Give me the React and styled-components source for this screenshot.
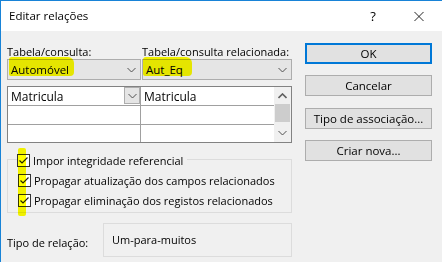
import styled, { createGlobalStyle } from "styled-components";

const GlobalStyle = createGlobalStyle`
  html, body { margin: 0; padding: 0; background: #fff; }
  body { font-family: "Open Sans", "Noto Sans", sans-serif; font-size: 11px; color: #000; }
`;

const Window = styled.div`
  width: 442px;
  height: 262px;
  box-sizing: border-box;
  border-top: 1px solid #1883d7;
  border-left: 1px solid #1883d7;
  background: #f0f0f0;
  display: flex;
  flex-direction: column;
  overflow: hidden;
`;

const TitleBar = styled.div`
  height: 30px;
  background: #fff;
  display: flex;
  align-items: center;
  padding-left: 8px;
  flex-shrink: 0;
`;

const Title = styled.div`
  flex: 1;
  font-size: 11.5px;
  padding-bottom: 1px;
`;

const TitleIcon = styled.div`
  width: ${(p) => p.$w}px;
  display: flex;
  justify-content: center;
  align-items: center;
  font-size: 13px;
`;

const Body = styled.div`
  display: flex;
  padding: 12px 0 0 6px;
  gap: 13px;
`;

const LeftCol = styled.div`
  width: 285px;
  display: flex;
  flex-direction: column;
`;

const LabelRow = styled.div`
  display: flex;
  height: 16px;
  align-items: center;
`;

const Label = styled.div`
  width: ${(p) => p.$w}px;
  white-space: nowrap;
`;

const ComboRow = styled.div`
  display: flex;
  gap: 1px;
`;

const Combo = styled.div`
  position: relative;
  width: ${(p) => p.$w}px;
  height: 21px;
  box-sizing: border-box;
  border: 1px solid #adadad;
  background: #e5e5e5;
  display: flex;
  align-items: center;
  justify-content: space-between;
  padding: 0 4px 0 3px;
  font-size: 11.5px;
`;

const Marker = styled.div`
  position: absolute;
  left: ${(p) => p.$l}px;
  top: ${(p) => p.$t}px;
  width: ${(p) => p.$w}px;
  height: ${(p) => p.$h}px;
  background: #ffff00;
  mix-blend-mode: multiply;
  border-radius: ${(p) => p.$r || "3px 6px 4px 2px"};
  pointer-events: none;
`;

const Grid = styled.div`
  margin-top: 6px;
  height: 57px;
  box-sizing: border-box;
  border: 1px solid #828282;
  background: #fff;
  display: flex;
`;

const Cells = styled.div`
  flex: 1;
  display: grid;
  grid-template-columns: 133px 1fr;
  grid-template-rows: 19px 19px 17px;
`;

const Cell = styled.div`
  border-right: ${(p) => (p.$last ? "none" : "1px solid #a0a0a0")};
  border-bottom: ${(p) => (p.$bottom ? "none" : "1px solid #a0a0a0")};
  display: flex;
  align-items: center;
  justify-content: space-between;
  padding-left: 3px;
  font-size: 12px;
`;

const CellDrop = styled.div`
  width: 16px;
  height: 17px;
  box-sizing: border-box;
  border: 1px solid #adadad;
  background: #e5e5e5;
  display: flex;
  align-items: center;
  justify-content: center;
  align-self: flex-start;
`;

const ScrollBar = styled.div`
  width: 17px;
  background: #f0f0f0;
  display: flex;
  flex-direction: column;
  align-items: center;
  padding: 0 0 1px;
`;

const ScrollArrow = styled.div`
  height: 17px;
  display: flex;
  align-items: center;
  justify-content: center;
`;

const Thumb = styled.div`
  width: 15px;
  height: 18px;
  background: #cdcdcd;
`;

const Spacer = styled.div`
  flex: 1;
`;

const Group = styled.div`
  margin-top: 16px;
  padding: 0 0 0 9px;
  border: 1px solid #dcdcdc;
  height: 54px;
  box-sizing: border-box;
  position: relative;
  display: flex;
  flex-direction: column;
  align-items: flex-start;
`;

const CheckRow = styled.div`
  display: flex;
  align-items: center;
  gap: 3px;
  height: 13px;
  white-space: nowrap;
  background: #f0f0f0;
  padding-right: ${(p) => (p.$legend ? 4 : 0)}px;
  margin-top: ${(p) => p.$mt}px;
  margin-left: ${(p) => p.$indent || 0}px;
`;

const Box = styled.span`
  width: 13px;
  height: 13px;
  box-sizing: border-box;
  border: 1px solid #333;
  background: #fff;
  display: flex;
  align-items: center;
  justify-content: center;
`;

const RelRow = styled.div`
  display: flex;
  align-items: center;
  margin-top: 10px;
`;

const RelLabel = styled.div`
  width: 96px;
  padding-top: 4px;
`;

const RelBox = styled.div`
  flex: 1;
  height: 34px;
  box-sizing: border-box;
  border: 1px solid #dcdcdc;
  padding: 8px 0 0 8px;
`;

const RightCol = styled.div`
  width: 127px;
  display: flex;
  flex-direction: column;
  gap: 11px;
`;

const Button = styled.button`
  height: 21px;
  width: 127px;
  box-sizing: border-box;
  border: ${(p) => (p.$default ? "2px solid #0078d7" : "1px solid #adadad")};
  background: #e1e1e1;
  font-family: inherit;
  font-size: 11.5px;
  color: #000;
  padding: 0;
  margin-top: ${(p) => p.$mt || 0}px;
`;

const Chevron = ({ up }) => (
  <svg width="9" height="6" viewBox="0 0 9 6">
    <polyline
      points={up ? "0.5,5 4.5,1 8.5,5" : "0.5,1 4.5,5 8.5,1"}
      fill="none"
      stroke={up ? "#606060" : "#505050"}
      strokeWidth={up ? 1.6 : 1}
    />
  </svg>
);

const Check = () => (
  <svg width="11" height="11" viewBox="0 0 11 11">
    <polyline points="1.5,5.5 4,8 9.5,2.5" fill="none" stroke="#222" strokeWidth="1.2" />
  </svg>
);

export default function App() {
  return (
    <>
      <GlobalStyle />
      <Window>
        <TitleBar>
          <Title>Editar relações</Title>
          <TitleIcon $w={10}>?</TitleIcon>
          <TitleIcon $w={36} />
          <TitleIcon $w={10}>
            <svg width="11" height="11" viewBox="0 0 11 11">
              <path d="M0.5 0.5 L10.5 10.5 M10.5 0.5 L0.5 10.5" stroke="#111" strokeWidth="1" />
            </svg>
          </TitleIcon>
          <TitleIcon $w={18} />
        </TitleBar>
        <Body>
          <LeftCol>
            <LabelRow>
              <Label $w={135}>Tabela/consulta:</Label>
              <Label $w={150}>Tabela/consulta relacionada:</Label>
            </LabelRow>
            <ComboRow>
              <Combo $w={134}>
                <span>Automóvel</span>
                <Chevron />
                <Marker $l={1} $t={-3} $w={65} $h={19} />
              </Combo>
              <Combo $w={150}>
                <span>Aut_Eq</span>
                <Chevron />
                <Marker $l={0} $t={-3} $w={49} $h={19} />
              </Combo>
            </ComboRow>
            <Grid>
              <Cells>
                <Cell>
                  <span>Matricula</span>
                  <CellDrop>
                    <Chevron />
                  </CellDrop>
                </Cell>
                <Cell $last>Matricula</Cell>
                <Cell />
                <Cell $last />
                <Cell $bottom />
                <Cell $last $bottom />
              </Cells>
              <ScrollBar>
                <ScrollArrow>
                  <Chevron up />
                </ScrollArrow>
                <Thumb />
                <Spacer />
                <ScrollArrow>
                  <Chevron />
                </ScrollArrow>
              </ScrollBar>
            </Grid>
            <Group>
              <CheckRow $legend $mt={-6}>
                <Box>
                  <Check />
                </Box>
                Impor integridade referencial
              </CheckRow>
              <CheckRow $mt={7} $indent={1}>
                <Box>
                  <Check />
                </Box>
                Propagar atualização dos campos relacionados
              </CheckRow>
              <CheckRow $mt={7} $indent={1}>
                <Box>
                  <Check />
                </Box>
                Propagar eliminação dos registos relacionados
              </CheckRow>
              <Marker $l={10} $t={-12} $w={8} $h={68} $r="2px" />
            </Group>
            <RelRow>
              <RelLabel>Tipo de relação:</RelLabel>
              <RelBox>Um-para-muitos</RelBox>
            </RelRow>
          </LeftCol>
          <RightCol>
            <Button $default>OK</Button>
            <Button>Cancelar</Button>
            <Button $mt={1}>Tipo de associação...</Button>
            <Button>Criar nova...</Button>
          </RightCol>
        </Body>
      </Window>
    </>
  );
}
